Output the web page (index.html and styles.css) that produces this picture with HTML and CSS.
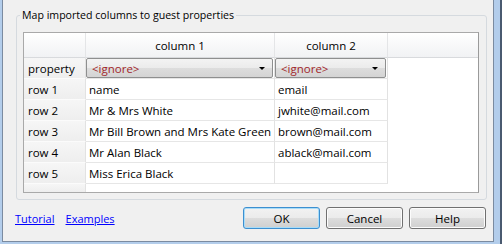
FILE: index.html
```html
<!DOCTYPE html>
<html lang="en">
<head>
  <meta charset="UTF-8" />
  <title>Import guests</title>
  <link rel="stylesheet" href="styles.css">
</head>
<body>
  <div class="window">
    <div class="dialog">
      <fieldset class="group">
        <legend>Map imported columns to guest properties</legend>
        <div class="table">
          <!-- header row -->
          <div class="colhead"></div>
          <div class="colhead">column 1</div>
          <div class="colhead">column 2</div>
          <div class="colhead rest"></div>

          <div class="rowhead">property</div>
          <div class="cell"><div class="combo">&lt;ignore&gt;<span class="arrow"></span></div></div>
          <div class="cell"><div class="combo">&lt;ignore&gt;<span class="arrow"></span></div></div>
          <div class="blank"></div>

          <div class="rowhead">row 1</div>
          <div class="cell">name</div>
          <div class="cell">email</div>
          <div class="blank"></div>

          <div class="rowhead">row 2</div>
          <div class="cell">Mr &amp; Mrs White</div>
          <div class="cell">jwhite@mail.com</div>
          <div class="blank"></div>

          <div class="rowhead">row 3</div>
          <div class="cell">Mr Bill Brown and Mrs Kate Green</div>
          <div class="cell">brown@mail.com</div>
          <div class="blank"></div>

          <div class="rowhead">row 4</div>
          <div class="cell">Mr Alan Black</div>
          <div class="cell">ablack@mail.com</div>
          <div class="blank"></div>

          <div class="rowhead">row 5</div>
          <div class="cell">Miss Erica Black</div>
          <div class="cell"></div>
          <div class="blank"></div>

          <div class="rowhead last"></div>
        </div>
      </fieldset>

      <div class="footer">
        <a href="#">Tutorial</a>
        <a href="#">Examples</a>
        <div class="buttons">
          <button class="default">OK</button>
          <button>Cancel</button>
          <button>Help</button>
        </div>
      </div>
    </div>
  </div>
</body>
</html>
```

FILE: styles.css
```css
body {
  margin: 0;
  font-family: 'Segoe UI', 'Open Sans', sans-serif;
  font-size: 11.5px;
  color: #000;
}
.window {
  display: flex;
  height: 244px;
  box-sizing: border-box;
  background: #b3cdeb;
  border-right: 2px solid #4a5a70;
  padding: 0 6px 2px 2px;
}
.dialog {
  flex: 1;
  display: flex;
  flex-direction: column;
  background: #f0f0f0;
  border: 1px solid #7b8ba0;
  border-top: none;
}
.group {
  margin: 7px 6px 0 13px;
  padding: 8px 7px 6px 6px;
  min-width: 0;
  border: 1px solid #d5dadf;
  border-radius: 3px;
}
.group legend {
  padding: 0 2px;
  margin-left: -3px;
  font-size: 10.6px;
  line-height: 17px;
}
.table {
  display: grid;
  grid-template-columns: 62px 189px 113px 1fr;
  grid-template-rows: 25px repeat(6, 21px) 1fr;
  height: 161px;
  box-sizing: border-box;
  border: 1px solid #a9a9a9;
  border-right-color: #9a9a9a;
  background: #fff;
  overflow: hidden;
}
.colhead {
  background: linear-gradient(#ffffff, #f1f2f4);
  border-right: 1px solid #e4e5e7;
  border-bottom: 1px solid #d8dadd;
  text-align: center;
  line-height: 25px;
}
.colhead.rest {
  border-right: none;
}
.rowhead {
  background: linear-gradient(#f6f6f6, #eeeeee);
  border-right: 1px solid #e2e2e2;
  border-bottom: 1px solid #fbfbfb;
  padding-left: 4px;
  line-height: 21px;
}
.rowhead.last {
  border-bottom: none;
}
.cell {
  border-right: 1px solid #e2e2e2;
  border-bottom: 1px solid #e6e6e6;
  padding-left: 3px;
  line-height: 21px;
  white-space: nowrap;
  overflow: hidden;
}
.cell:has(.combo) {
  padding: 0 1px 0 0;
}
.combo {
  position: relative;
  height: 20px;
  box-sizing: border-box;
  border: 1px solid #8e8f8f;
  border-radius: 2px;
  background: linear-gradient(#f3f3f3 0%, #ebebeb 50%, #dddddd 51%, #d4d4d4 100%);
  color: #a1262a;
  padding-left: 5px;
  line-height: 19px;
}
.arrow {
  position: absolute;
  right: 7px;
  top: 8px;
  border-left: 3px solid transparent;
  border-right: 3px solid transparent;
  border-top: 3px solid #000;
}
.footer {
  display: flex;
  align-items: center;
  gap: 11px;
  margin-top: 7px;
  padding: 0 7px 0 12px;
  font-size: 11px;
}
.footer a {
  color: #0000ff;
}
.buttons {
  margin-left: auto;
  display: flex;
  gap: 6px;
}
.buttons button {
  width: 77px;
  height: 22px;
  font: inherit;
  font-size: 11.5px;
  color: #000;
  border: 1px solid #707070;
  border-radius: 3px;
  background: linear-gradient(#f2f2f2 0%, #ebebeb 50%, #dddddd 51%, #cfcfcf 100%);
  box-shadow: inset 0 0 0 1px #fcfcfc;
  padding: 0;
}
.buttons button.default {
  border-color: #3c8fd0;
  box-shadow: inset 0 0 0 1px #a8dcf8;
}
```
